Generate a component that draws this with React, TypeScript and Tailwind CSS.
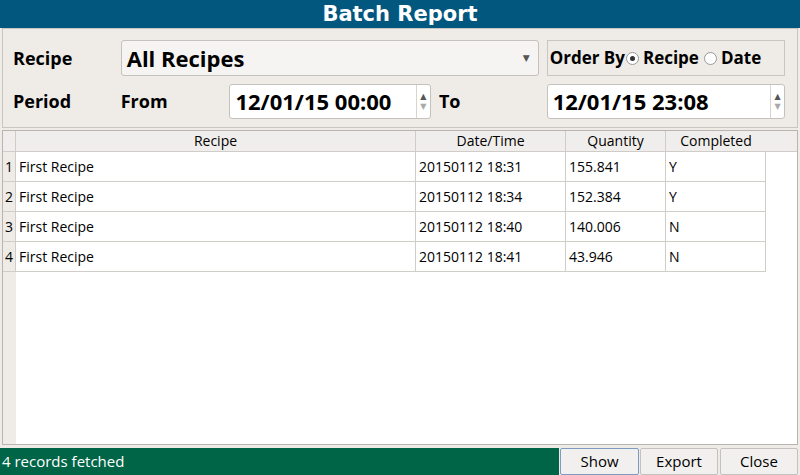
import React from "react";

const rows = [
  ["First Recipe", "20150112 18:31", "155.841", "Y"],
  ["First Recipe", "20150112 18:34", "152.384", "Y"],
  ["First Recipe", "20150112 18:40", "140.006", "N"],
  ["First Recipe", "20150112 18:41", "43.946", "N"],
];

function Spin() {
  return (
    <div className="flex flex-col items-center justify-center w-[14px] border-l border-[#d8d4d0] text-[8px] leading-[10px] text-[#555]">
      <span>▲</span>
      <span className="text-[#aaa]">▼</span>
    </div>
  );
}

export default function App() {
  return (
    <div className="w-[800px] h-[475px] bg-[#efebe7] flex flex-col overflow-hidden" style={{ fontFamily: '"Open Sans", "DejaVu Sans", sans-serif' }}>
      <div className="h-[28px] bg-[#02577f] text-white font-bold text-[21px] leading-[28px] text-center" style={{ fontFamily: '"DejaVu Sans", sans-serif' }}>Batch Report</div>
      <div className="h-[100px] mx-[2px] border border-[#c9c5c1] flex flex-col gap-[7px] pt-[11px] pl-[10px] pr-[12px] text-[18px] font-bold text-black">
        <div className="flex items-center h-[36px]">
          <div className="w-[108px]">Recipe</div>
          <div className="w-[419px] h-[36px] bg-[#f6f4f2] border border-[#c5c1bd] rounded-[3px] flex items-center pl-[5px] pr-[8px] text-[22px]">
            <span className="flex-1">All Recipes</span>
            <span className="text-[9px] text-[#555]">▼</span>
          </div>
          <div className="ml-[8px] w-[239px] h-[36px] border border-[#c9c5c1] flex items-center pl-[2px] gap-[1px] text-[17px]">
            <span>Order By</span>
            <span className="w-[13px] h-[13px] rounded-full border border-[#999] bg-white flex items-center justify-center"><span className="w-[5px] h-[5px] rounded-full bg-[#333]" /></span>
            <span className="ml-[3px]">Recipe</span>
            <span className="ml-[4px] w-[13px] h-[13px] rounded-full border border-[#999] bg-white" />
            <span className="ml-[3px]">Date</span>
          </div>
        </div>
        <div className="flex items-center h-[36px]">
          <div className="w-[108px]">Period</div>
          <div className="w-[109px]">From</div>
          <div className="w-[202px] h-[35px] bg-white border border-[#c5c1bd] rounded-[3px] flex">
            <span className="flex-1 pl-[5px] text-[22px] leading-[33px]">12/01/15 00:00</span>
            <Spin />
          </div>
          <div className="w-[116px] pl-[8px]">To</div>
          <div className="w-[239px] h-[35px] bg-white border border-[#c5c1bd] rounded-[3px] flex">
            <span className="flex-1 pl-[5px] text-[22px] leading-[33px]">12/01/15 23:08</span>
            <Spin />
          </div>
        </div>
      </div>
      <div className="flex-1 mx-[2px] mt-[2px] mb-[3px] border border-[#b8b4b0] bg-white flex flex-col text-[14px] text-black">
        <div className="flex h-[21px] bg-[#f0eeec] border-b border-[#d0ccc8] leading-[20px]">
          <div className="w-[13px] border-r border-[#d0ccc8]" />
          <div className="w-[400px] text-center border-r border-[#d0ccc8]">Recipe</div>
          <div className="w-[150px] text-center border-r border-[#d0ccc8]">Date/Time</div>
          <div className="w-[100px] text-center border-r border-[#d0ccc8]">Quantity</div>
          <div className="w-[100px] text-center">Completed</div>
        </div>
        <div className="flex-1 flex">
          <div className="w-[13px] bg-[#efebe7] flex flex-col">
            {rows.map((_, i) => (
              <div key={i} className="h-[30px] border-b border-r border-[#d0ccc8] text-center leading-[30px]">{i + 1}</div>
            ))}
          </div>
          <div className="flex flex-col">
            {rows.map((r, i) => (
              <div key={i} className="flex h-[30px] leading-[29px] border-b border-[#d0ccc8]">
                <div className="w-[400px] pl-[3px] border-r border-[#d0ccc8]">{r[0]}</div>
                <div className="w-[150px] pl-[3px] border-r border-[#d0ccc8]">{r[1]}</div>
                <div className="w-[100px] pl-[3px] border-r border-[#d0ccc8]">{r[2]}</div>
                <div className="w-[100px] pl-[3px] border-r border-[#d0ccc8]">{r[3]}</div>
              </div>
            ))}
          </div>
        </div>
      </div>
      <div className="h-[27px] flex text-[15px]">
        <div className="flex-1 bg-[#006446] text-white leading-[27px] pl-[2px]">4 records fetched</div>
        <button className="w-[79px] ml-[1px] border border-[#7d9cc0] bg-[#f2f0ee] rounded-[2px]">Show</button>
        <button className="w-[78px] ml-[1px] border border-[#c5c1bd] bg-[#f2f0ee] rounded-[2px]">Export</button>
        <button className="w-[78px] ml-[2px] mr-[2px] border border-[#c5c1bd] bg-[#f2f0ee] rounded-[2px]">Close</button>
      </div>
    </div>
  );
}
